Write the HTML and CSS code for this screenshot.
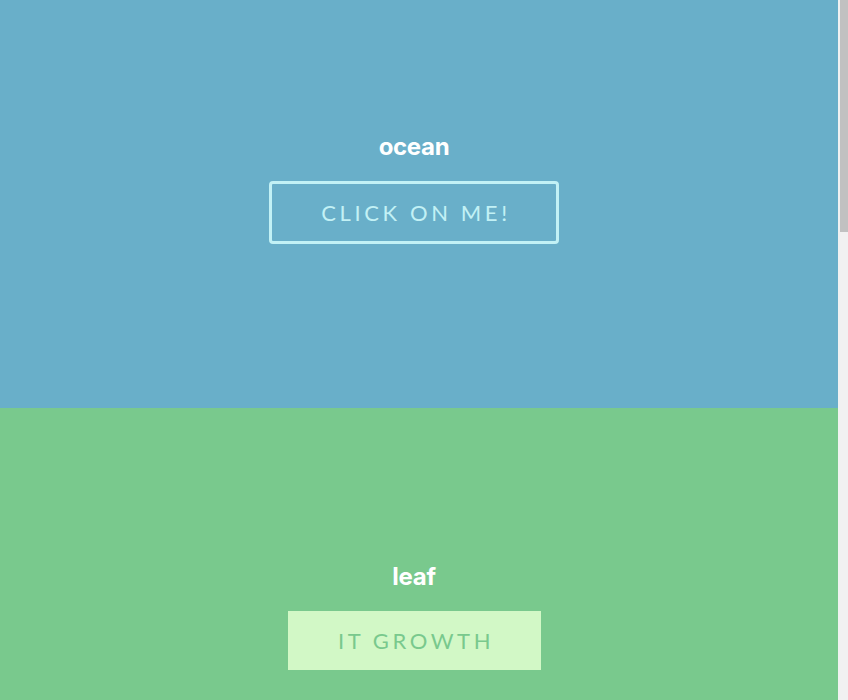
FILE: index.html
```html
<!DOCTYPE html>
<html lang="en">
<head>
<meta charset="utf-8">
<title>Buttons</title>
<link rel="stylesheet" href="styles.css">
</head>
<body>
  <main class="page">
    <section class="panel panel-ocean">
      <h2 class="panel-title">ocean</h2>
      <button class="btn btn-ocean" type="button">CLICK ON ME!</button>
    </section>
    <section class="panel panel-leaf">
      <h2 class="panel-title">leaf</h2>
      <button class="btn btn-leaf" type="button">IT GROWTH</button>
    </section>
  </main>
  <div class="scrollbar" aria-hidden="true"><div class="scrollbar-thumb"></div></div>
</body>
</html>
```

FILE: styles.css
```css
html {
  background: #f1f1f1;
  scrollbar-width: none;
}
html::-webkit-scrollbar {
  display: none;
}
body {
  margin: 0;
  font-family: Inter, "Liberation Sans", sans-serif;
}
.page {
  margin-right: 10px;
}
.scrollbar {
  position: fixed;
  top: 0;
  right: 0;
  width: 10px;
  height: 100vh;
  background: #f1f1f1;
}
.scrollbar-thumb {
  margin-left: 2px;
  height: 232px;
  background: #c1c1c1;
}
.panel {
  display: flex;
  flex-direction: column;
  align-items: center;
  box-sizing: border-box;
  height: 408px;
  padding-right: 10px;
}
.panel-ocean {
  background: #69afc9;
  padding-top: 132px;
}
.panel-leaf {
  background: #79c98d;
  padding-top: 154px;
  height: 1704px;
}
.panel-title {
  margin: 0 0 20px;
  font-family: Inter, "Liberation Sans", sans-serif;
  font-weight: 700;
  font-size: 24px;
  line-height: 29px;
  color: #ffffff;
  letter-spacing: -0.3px;
}
.btn {
  box-sizing: border-box;
  font-family: Lato, "Liberation Sans", sans-serif;
  font-size: 22px;
  line-height: 27px;
  letter-spacing: 3.6px;
  text-align: center;
  padding: 16px 0 16px 4px;
  border: none;
  border-radius: 0;
  cursor: pointer;
}
.btn-ocean {
  width: 290px;
  background: transparent;
  color: #c2f1f5;
  border: 3px solid #c2f1f5;
  border-radius: 4px;
  padding: 15px 0 15px 4px;
}
.btn-leaf {
  width: 253px;
  background: #d2f8c6;
  color: #79c98d;
}
```
